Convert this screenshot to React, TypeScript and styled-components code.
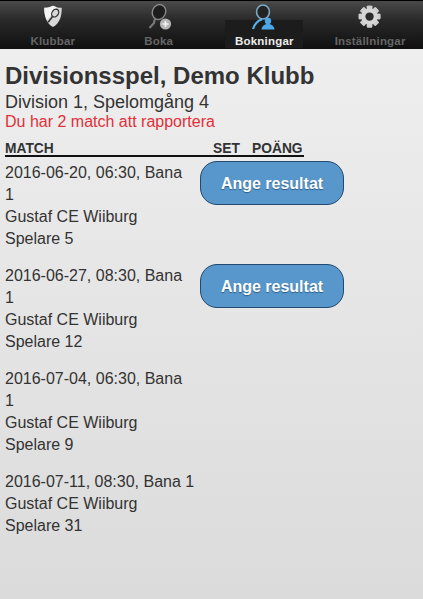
import React from "react";
import styled, { createGlobalStyle } from "styled-components";

const Global = createGlobalStyle`
  html, body { margin: 0; padding: 0; height: 100%; }
  body { font-family: "Liberation Sans", Arial, sans-serif; background: #e0e0e0; }
  #root { min-height: 100%; }
`;

const Page = styled.div`
  height: 599px;
  width: 423px;
  overflow: hidden;
  display: flex;
  flex-direction: column;
  background: linear-gradient(#f0f0f0, #dbdbdb);
`;

const TabBar = styled.nav`
  height: 49px;
  flex: none;
  display: grid;
  grid-template-columns: repeat(4, 1fr);
  box-sizing: border-box;
  border-top: 1px solid #000;
  border-bottom: 1px solid #111;
  background: linear-gradient(#4a4a4a, #2a2a2a 40%, #101010 100%);
`;

const Tab = styled.div<{ $active?: boolean }>`
  position: relative;
  display: flex;
  flex-direction: column;
  align-items: center;
  padding-top: 2px;
  font-size: 11.5px;
  font-weight: bold;
  line-height: 14px;
  letter-spacing: 0.2px;
  color: ${(p) => (p.$active ? "#ededed" : "#666")};
  svg { display: block; width: 28px; height: 28px; position: relative; }
  span { margin-top: 3px; position: relative; }
  ${(p) =>
    p.$active
      ? `&::before { content: ""; position: absolute; left: 13px; right: 14px; top: 19px; bottom: 0; background: #1c1c1c; }`
      : ""}
`;

const Content = styled.main`
  padding: 14px 5px 0;
  color: #333;
`;

const Title = styled.h1`
  margin: 0;
  font-size: 24px;
  line-height: 26px;
  font-weight: bold;
`;

const Sub = styled.div`
  font-size: 18px;
  line-height: 22px;
  margin-top: 2px;
`;

const Warn = styled.div`
  font-size: 16px;
  line-height: 18px;
  color: #e0303a;
`;

const HeadRow = styled.div`
  display: flex;
  margin-top: 11px;
  width: 299px;
  height: 15px;
  box-sizing: border-box;
  border-bottom: 2px solid #111;
  font-size: 13.8px;
  line-height: 14px;
  font-weight: bold;
`;

const HeadMatch = styled.span`
  width: 208px;
`;

const HeadSet = styled.span`
  width: 39px;
`;

const Rows = styled.div`
  display: flex;
  flex-direction: column;
  gap: 15px;
  margin-top: 5px;
`;

const Row = styled.div`
  display: flex;
  align-items: flex-start;
`;

const Info = styled.div`
  width: 190px;
  margin-right: 5px;
  font-size: 16px;
  line-height: 22px;
  color: #333;
`;

const Btn = styled.button`
  width: 144px;
  height: 44px;
  margin-top: -1px;
  box-sizing: border-box;
  border: 1px solid #23496e;
  border-radius: 17px;
  background: #5797cb;
  color: #fff;
  font-family: inherit;
  font-size: 16px;
  font-weight: bold;
  text-shadow: 0 1px 1px #2d5d87;
  padding: 1px 0 0;
`;

const Shield = () => (
  <svg viewBox="-2 -1 32 32">
    <path d="M14 2 C18 4 21 4.5 24 4.5 C24 14 22 22 14 26.5 C6 22 4 14 4 4.5 C7 4.5 10 4 14 2Z" fill="#d8d8d8" />
    <path d="M14 2 C10 4 7 4.5 4 4.5 C4 10 5 15 7 18 C12 14 16 8 18 3.5 C16.5 3.2 15 2.6 14 2Z" fill="#f4f4f4" />
    <ellipse cx="16.5" cy="10.5" rx="3.6" ry="4.8" transform="rotate(35 16.5 10.5)" fill="none" stroke="#333" strokeWidth="1.5" />
    <path d="M13.5 14.5 L8.5 21" stroke="#333" strokeWidth="1.8" />
  </svg>
);

const Racket = () => (
  <svg viewBox="0 0 28 28">
    <ellipse cx="14" cy="9" rx="6.6" ry="7.6" transform="rotate(25 14 9)" fill="#1d1d1d" stroke="#8a8a8a" strokeWidth="1.4" />
    <path d="M10 15.5 L9 20 L4.5 25" stroke="#777" strokeWidth="2.2" fill="none" />
    <circle cx="20.5" cy="21" r="5.6" fill="#b5b5b5" />
    <path d="M20.5 18v6M17.5 21h6" stroke="#f5f5f5" strokeWidth="1.6" />
  </svg>
);

const Person = () => (
  <svg viewBox="0 0 28 28">
    <ellipse cx="13" cy="9" rx="6.4" ry="7" fill="#232323" stroke="#7fa9c6" strokeWidth="1.6" />
    <path d="M3 26 C5 20 8 17.5 12 16.5" stroke="#56b0ea" strokeWidth="2.2" fill="none" />
    <circle cx="18" cy="18" r="3.2" fill="#4aa8e8" />
    <path d="M11.5 26.5 C12 22.5 15 21 18 21 C21 21 24 22.5 24.5 26.5Z" fill="#4aa8e8" />
  </svg>
);

const Gear = () => (
  <svg viewBox="-1 -1 31 31">
    <g fill="#cfcfcf">
      {[0, 45, 90, 135, 180, 225, 270, 315].map((a) => (
        <rect key={a} x="11" y="2" width="6" height="24" rx="1" transform={`rotate(${a} 14 14)`} />
      ))}
    </g>
    <circle cx="14" cy="14" r="9" fill="#d6d6d6" />
    <circle cx="14" cy="14" r="4.6" fill="#2b2b2b" />
  </svg>
);

const matches = [
  { date: "2016-06-20, 06:30, Bana 1", player: "Spelare 5", report: true },
  { date: "2016-06-27, 08:30, Bana 1", player: "Spelare 12", report: true },
  { date: "2016-07-04, 06:30, Bana 1", player: "Spelare 9", report: false },
  { date: "2016-07-11, 08:30, Bana 1", player: "Spelare 31", report: false },
];

export default function App() {
  return (
    <Page>
      <Global />
      <TabBar>
        <Tab><Shield /><span>Klubbar</span></Tab>
        <Tab><Racket /><span>Boka</span></Tab>
        <Tab $active><Person /><span>Bokningar</span></Tab>
        <Tab><Gear /><span>Inställningar</span></Tab>
      </TabBar>
      <Content>
        <Title>Divisionsspel, Demo Klubb</Title>
        <Sub>Division 1, Spelomgång 4</Sub>
        <Warn>Du har 2 match att rapportera</Warn>
        <HeadRow>
          <HeadMatch>MATCH</HeadMatch>
          <HeadSet>SET</HeadSet>
          <span>POÄNG</span>
        </HeadRow>
        <Rows>
          {matches.map((m) => (
            <Row key={m.date}>
              <Info>
                {m.date}
                <br />
                Gustaf CE Wiiburg
                <br />
                {m.player}
              </Info>
              {m.report && <Btn>Ange resultat</Btn>}
            </Row>
          ))}
        </Rows>
      </Content>
    </Page>
  );
}
